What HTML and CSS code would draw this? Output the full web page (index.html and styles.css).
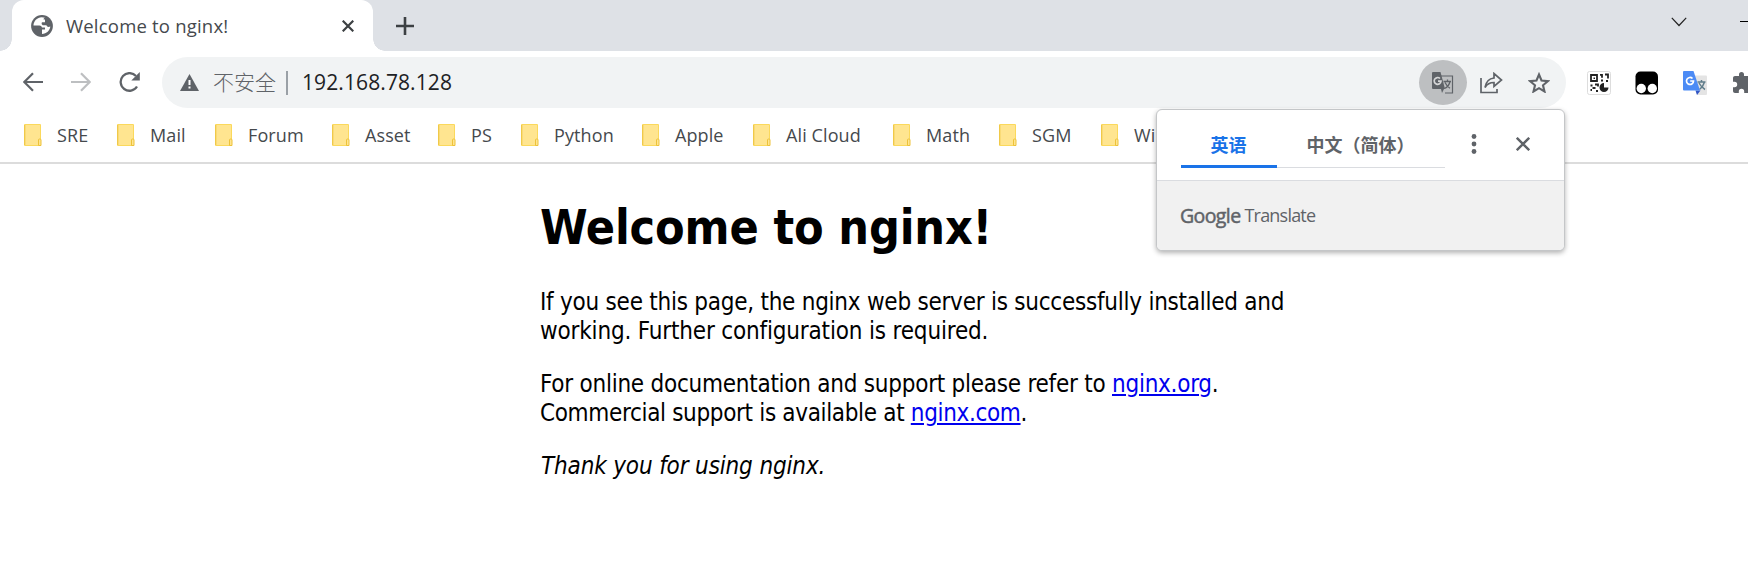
FILE: index.html
```html
<!DOCTYPE html>
<html lang="zh-CN">
<head>
<meta charset="utf-8">
<title>Welcome to nginx!</title>
<link rel="stylesheet" href="styles.css">
</head>
<body>
<svg class="defs" width="0" height="0">
  <symbol id="folder" viewBox="0 0 18 22">
    <rect x="0" y="0" width="17" height="22" rx="1" fill="#fbd95c"/>
    <rect x="1" y="1" width="15" height="20" fill="#ffe590"/>
    <path d="M.700 1v20" stroke="#f0c849" stroke-width="1.300"/>
    <path d="M14.500 21.500v-5.500q0-1 1-1h.500q1 0 1 1v5.500z" fill="#ffe590" stroke="#edc23a"/>
  </symbol>
</svg>
<header class="tabstrip">
  <div class="tab">
    <svg class="globe" width="22" height="22" viewBox="0 0 22 22"><circle cx="11" cy="11" r="10.900" fill="#5f6368"/><path d="M9 2.500C5 3.500 2.500 7 2.500 10.500h6q2 0 2.500 2h3v2h-3v4.500c4.500-.200 8-3.600 8.300-7.500-1.500.800-3.500.500-3.800-1.200h-3.800q-1.800-1-.800-3H14V4.500h-1.500Q12.500 3 14 2.800 11 2 9 2.500z" fill="#fff"/><path d="M2.500 11.500h5q1 3-1 4.500h2.500v3.500Q3.500 18 2.500 11.500z" fill="#5f6368"/></svg>
    <span class="tab-title">Welcome to nginx!</span>
    <svg width="12" height="12" viewBox="0 0 12 12"><path d="M.700.700l10.600 10.600M11.300.700L.700 11.300" stroke="#3c4043" stroke-width="2.200"/></svg>
  </div>
  <svg class="plus" width="18" height="18" viewBox="0 0 18 18"><path d="M9 0v18M0 9h18" stroke="#3c4043" stroke-width="2.600"/></svg>
  <svg class="chevron" width="16" height="10" viewBox="0 0 16 10"><path d="M.800.800L8 8.500 15.200.800" fill="none" stroke="#222" stroke-width="1.200"/></svg>
  <i class="minimize"></i>
</header>
<nav class="toolbar">
  <svg width="20" height="20" viewBox="0 0 20 20"><path d="M20 10H1.500M10 1.200L1.300 10l8.700 8.800" fill="none" stroke="#5f6368" stroke-width="2.200"/></svg>
  <svg width="20" height="20" viewBox="0 0 20 20"><path d="M0 10h18.500M10 1.200l8.700 8.800-8.700 8.800" fill="none" stroke="#bdbfc1" stroke-width="2.200"/></svg>
  <svg width="22" height="20" viewBox="0 0 22 20"><path d="M18 14.500A8.800 8.800 0 1 1 17 4" fill="none" stroke="#5f6368" stroke-width="2.300"/><path d="M20.800 0v8.500h-8.500z" fill="#5f6368"/></svg>
  <div class="omnibox">
    <svg width="19" height="17" viewBox="0 0 19 17"><path d="M9.500 0L19 17H0z" fill="#5f6368"/><path d="M9.500 6v5M9.500 12.500v2" stroke="#fff" stroke-width="2"/></svg>
    <span class="insecure">不安全</span>
    <i class="separator"></i>
    <span class="url">192.168.78.128</span>
    <div class="translate-btn">
      <svg width="22" height="22" viewBox="0 0 22 22"><path d="M9 4h11.500v17H13" fill="none" stroke="#5f6368" stroke-width="1.200"/><path d="M11.500 9.500h7.500M15.500 7.500v2M18 9.500q-1 5-5.500 7M13 10.500q2 4 5 5.800" fill="none" stroke="#5f6368" stroke-width="1.300"/><path d="M1 0h7.500l4.500 17H1q-1 0-1-1V1q0-1 1-1z" fill="#5f6368"/><path d="M12 17l-2 4-1-4z" fill="#5f6368"/><path d="M8 6.500a3.400 3.400 0 1 0 1 2.700H6" fill="none" stroke="#d5d6d7" stroke-width="1.700"/></svg>
    </div>
    <svg class="share" width="23" height="22" viewBox="0 0 23 22"><path d="M1 6v14.500h16V17M5 15.500C6 9.500 9 6.500 14 6V1.500L21.500 8 14 14.500V10.500C10 10.500 7 12 5 15.500z" fill="none" stroke="#5f6368" stroke-width="1.700"/></svg>
    <svg class="star" width="22" height="21" viewBox="0 0 22 21"><path d="M11 2.500l2.500 6 6.500.600-5 4.200 1.500 6.200L11 16.200l-5.500 3.300L7 13.300 2 9.100l6.500-.600z" fill="none" stroke="#5f6368" stroke-width="2.100"/></svg>
  </div>
  <div class="extensions">
    <svg width="24" height="24" viewBox="0 0 24 24"><rect x=".500" y=".500" width="23" height="23" rx="2" fill="#fff" stroke="#ddd"/><path d="M4 4h6v6H4zM13 3.800h2v3M18 3.500h3v4M14 9.500h2M19 10h2M3.500 14.500h2M8 13.500h3v2M5 19h-1.500M5.500 17h3M9 20h2" fill="none" stroke="#222" stroke-width="1.800"/><path d="M6.500 6.500h1.500v1.500H6.500z" fill="#222"/><path d="M17 12v4.500h4.500A4.500 4.500 0 1 1 17 12z" fill="#222"/></svg>
    <svg width="24" height="24" viewBox="0 0 24 24"><rect x=".500" y=".500" width="22.500" height="23" rx="5" fill="#000"/><circle cx="6.300" cy="17.500" r="4.700" fill="#fff"/><circle cx="17.300" cy="17.500" r="4.700" fill="#fff"/></svg>
    <svg width="24" height="24" viewBox="0 0 24 24"><path d="M8 4.500h15q1 0 1 1V23q0 1-1 1h-9z" fill="#e4e4e4"/><path d="M14.500 11h8M18.500 9v2M21.500 11q-1.500 5-5 7.500M16 12q2.500 4.500 6 6.500" fill="none" stroke="#607d8b" stroke-width="1.500"/><path d="M12.500 19.500h5L14 24z" fill="#3155c4"/><path d="M1 0h9.500L17 19.500H1q-1 0-1-1V1q0-1 1-1z" fill="#4c8bf5"/><path d="M9.500 7.500A3.500 3.500 0 1 0 10.500 10H7.200" fill="none" stroke="#fff" stroke-width="1.700"/></svg>
    <svg width="24" height="24" viewBox="0 0 24 24"><path d="M20.500 11H19V7c0-1.100-.900-2-2-2h-4V3.500a2.500 2.500 0 0 0-5 0V5H4c-1.100 0-2 .900-2 2v3.800h1.500a2.700 2.700 0 0 1 0 5.400H2V20c0 1.100.900 2 2 2h3.800v-1.500a2.700 2.700 0 0 1 5.400 0V22H17c1.100 0 2-.900 2-2v-4h1.500a2.500 2.500 0 0 0 0-5z" fill="#5f6368"/></svg>
  </div>
</nav>
<nav class="bookmarks">
  <a><svg><use href="#folder"/></svg>SRE</a>
  <a><svg><use href="#folder"/></svg>Mail</a>
  <a><svg><use href="#folder"/></svg>Forum</a>
  <a><svg><use href="#folder"/></svg>Asset</a>
  <a><svg><use href="#folder"/></svg>PS</a>
  <a><svg><use href="#folder"/></svg>Python</a>
  <a><svg><use href="#folder"/></svg>Apple</a>
  <a><svg><use href="#folder"/></svg>Ali Cloud</a>
  <a><svg><use href="#folder"/></svg>Math</a>
  <a><svg><use href="#folder"/></svg>SGM</a>
  <a><svg><use href="#folder"/></svg>Wi</a>
</nav>
<main class="page">
  <h1>Welcome to nginx!</h1>
  <p>If you see this page, the nginx web server is successfully installed and<br><span class="loose">working. Further configuration is required.</span></p>
  <p>For online documentation and support please refer to <a href="#">nginx.org</a>.<br><span class="tight">Commercial support is available at <a href="#">nginx.com</a>.</span></p>
  <p class="thanks"><em>Thank you for using nginx.</em></p>
</main>
<aside class="popup">
  <div class="popup-head">
    <div class="lang active">英语</div>
    <div class="lang">中文（简体）</div>
    <svg class="dots" width="6" height="20" viewBox="0 0 6 20"><circle cx="3" cy="2.500" r="2.400"/><circle cx="3" cy="10" r="2.400"/><circle cx="3" cy="17.500" r="2.400"/></svg>
    <svg class="close" width="14" height="14" viewBox="0 0 14 14"><path d="M.800.800l12.400 12.400M13.200.800L.800 13.200" stroke="#5f6368" stroke-width="2.400"/></svg>
  </div>
  <div class="popup-foot"><span class="google">Google</span><span class="product">Translate</span></div>
</aside>
</body>
</html>
```
FILE: styles.css
```css
* { box-sizing: border-box; }
body { margin: 0; width: 1748px; height: 569px; overflow: hidden; background: #fff; font-family: "Open Sans", "Noto Sans CJK SC", sans-serif; position: relative; }
svg { display: block; flex: none; }
.defs { position: absolute; }
.tabstrip { height: 51px; background: #dee1e6; display: flex; padding-left: 12px; }
.tab { width: 361px; height: 51px; background: #fff; border-radius: 12px 12px 0 0; display: flex; align-items: center; padding: 0 19px 0 19px; position: relative; }
.tab::before, .tab::after { content: ""; position: absolute; bottom: 0; width: 12px; height: 12px; }
.tab::before { left: -12px; background: radial-gradient(circle at 0 0, #dee1e6 11.500px, #fff 12px); }
.tab::after { right: -12px; background: radial-gradient(circle at 100% 0, #dee1e6 11.500px, #fff 12px); }
.tab-title { margin-left: 13px; flex: 1; font-size: 18.500px; letter-spacing: .2px; color: #45494d; }
.plus { margin: 17px 0 0 23px; }
.chevron { margin: 17px 0 0 auto; }
.minimize { width: 8px; height: 1px; background: #000; margin: 21px 0 0 53px; }
.toolbar { height: 62px; padding: 6px 0 0 23px; display: flex; align-items: flex-start; overflow: hidden; }
.toolbar > svg { margin: 15px 28px 0 0; }
.toolbar > svg:nth-of-type(3) { margin-right: 21px; }
.omnibox { flex: none; width: 1404px; height: 51px; border-radius: 26px; background: #f1f3f4; display: flex; align-items: center; padding: 0 16px 0 18px; }
.insecure { margin-left: 14px; margin-top: -3px; width: 64px; font: 300 21px "Noto Sans CJK SC", sans-serif; color: #5f6368; white-space: nowrap; }
.separator { width: 2px; height: 24px; margin-left: 9px; background: #9aa0a6; }
.url { margin: -2px 0 0 14px; font-size: 21px; letter-spacing: .1px; color: #202124; }
.translate-btn { margin-left: auto; width: 48px; height: 45px; border-radius: 50%; background: #bdbfc1; display: flex; align-items: center; justify-content: center; }
.share { margin-left: 13px; }
.star { margin-left: 25px; }
.extensions { flex: none; display: flex; gap: 24px; margin: 14px 0 0 21px; }
.bookmarks { height: 51px; border-bottom: 2px solid #dcdcdc; padding: 0 0 5px 24px; display: grid; grid-template-columns: 93px 98px 117px 106px 83px 121px 111px 140px 106px 102px 80px; align-items: center; font-size: 18px; color: #45494d; }
.bookmarks a { display: flex; align-items: center; gap: 15px; white-space: nowrap; letter-spacing: .1px; }
.bookmarks svg { width: 18px; height: 22px; }
.page { width: 840px; margin-left: 540px; font: 24px/29px "DejaVu Sans Condensed", "DejaVu Sans", sans-serif; font-stretch: condensed; letter-spacing: -.25px; color: #000; }
.page h1 { margin: 0; padding-top: 34px; font-size: 48px; line-height: 58px; letter-spacing: -.15px; }
.page p { margin: 24px 0; white-space: nowrap; }
.page h1 + p { margin-top: 32px; }
.page a { color: #00e; }
.loose { letter-spacing: -.17px; }
.tight { letter-spacing: -.34px; }
.thanks { letter-spacing: -.15px; padding-left: 1px; }
.popup { position: absolute; left: 1156px; top: 109px; width: 409px; height: 142px; border: 1px solid #c4c6c8; border-radius: 6px; background: #fff; box-shadow: 0 2px 5px rgba(0,0,0,.3); overflow: hidden; }
.popup-head { height: 71px; padding: 14px 0 0 24px; display: flex; border-bottom: 1px solid #dadce0; }
.lang { height: 44px; width: 168px; padding-right: 1px; text-align: center; border-bottom: 1px solid #dadce0; color: #5f6368; font: 700 18px/41px "Noto Sans CJK SC", sans-serif; white-space: nowrap; }
.lang.active { width: 96px; color: #1a73e8; border-bottom: 3px solid #1a73e8; }
.dots { margin: 10px 0 0 26px; fill: #5f6368; }
.close { margin: 13px 0 0 39px; }
.popup-foot { height: 70px; background: #f1f1f1; padding: 0 0 2px 23px; display: flex; align-items: center; gap: 4px; color: #5f6368; font-size: 18px; }
.google { font-size: 19.500px; letter-spacing: -.6px; -webkit-text-stroke: .5px #5f6368; }
.product { letter-spacing: -.8px; }
```
